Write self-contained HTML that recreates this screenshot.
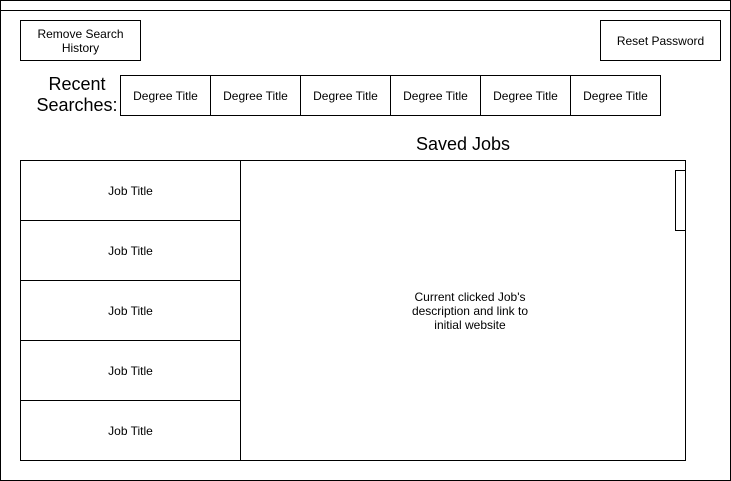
<!DOCTYPE html><html><head><style>
body{margin:0;width:731px;height:481px;background:#fff;position:relative;font-family:"Liberation Sans",Arial,sans-serif;overflow:hidden}
.b{position:absolute;border:1px solid #000;box-sizing:border-box;display:flex;align-items:center;justify-content:center;text-align:center;font-size:12px;color:#000;background:#fff}
.t{position:absolute;font-size:18px;text-align:center;line-height:21px}
</style></head><body>
<div class="b" style="left:0;top:0;width:731px;height:481px"></div>
<div style="position:absolute;left:0;top:10px;width:731px;height:1px;background:#000"></div>
<div class="b" style="left:20px;top:20px;width:121px;height:41px;line-height:14px">Remove Search<br>History</div>
<div class="b" style="left:600px;top:20px;width:121px;height:41px">Reset Password</div>
<div class="t" style="left:30px;top:74px;width:94px">Recent<br>Searches:</div>
<div class="b" style="left:120px;top:75px;width:91px;height:41px">Degree Title</div>
<div class="b" style="left:210px;top:75px;width:91px;height:41px">Degree Title</div>
<div class="b" style="left:300px;top:75px;width:91px;height:41px">Degree Title</div>
<div class="b" style="left:390px;top:75px;width:91px;height:41px">Degree Title</div>
<div class="b" style="left:480px;top:75px;width:91px;height:41px">Degree Title</div>
<div class="b" style="left:570px;top:75px;width:91px;height:41px">Degree Title</div>
<div class="t" style="left:363px;top:134px;width:200px">Saved Jobs</div>
<div class="b" style="left:240px;top:160px;width:446px;height:301px;line-height:14px;padding-left:14px">Current clicked Job's<br>description and link to<br>initial website</div>
<div class="b" style="left:675px;top:170px;width:11px;height:61px"></div>
<div class="b" style="left:20px;top:160px;width:221px;height:61px">Job Title</div>
<div class="b" style="left:20px;top:220px;width:221px;height:61px">Job Title</div>
<div class="b" style="left:20px;top:280px;width:221px;height:61px">Job Title</div>
<div class="b" style="left:20px;top:340px;width:221px;height:61px">Job Title</div>
<div class="b" style="left:20px;top:400px;width:221px;height:61px">Job Title</div>
</body></html>
